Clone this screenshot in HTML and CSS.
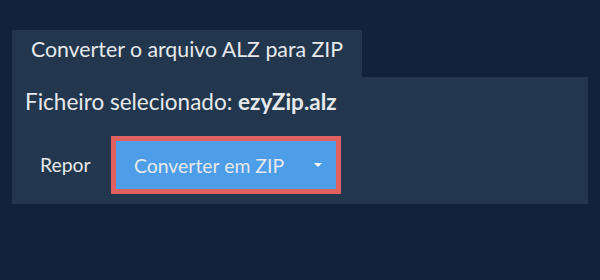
FILE: index.html
```html
<!DOCTYPE html>
<html>
<head>
<meta charset="utf-8">
<link rel="stylesheet" href="styles.css">
</head>
<body>
<div class="wrap">
  <div class="tab">Converter o arquivo ALZ para ZIP</div>
  <div class="panel">
    <div class="file">Ficheiro selecionado: <b>ezyZip.alz</b></div>
    <div class="actions">
      <button class="reset">Repor</button>
      <div class="convert">
        <span class="label">Converter em ZIP</span>
        <span class="caret"></span>
      </div>
    </div>
  </div>
</div>
</body>
</html>
```
FILE: styles.css
```css
html, body {
  margin: 0;
  padding: 0;
  background: #11233a;
  width: 600px;
  height: 280px;
  overflow: hidden;
  font-family: Lato, "Open Sans", sans-serif;
  color: #e6e9ec;
}
.wrap {
  padding: 30px 12px 0 12px;
}
.tab {
  width: 350px;
  height: 47px;
  box-sizing: border-box;
  background: #22374d;
  font-size: 21.3px;
  line-height: 25px;
  padding-top: 7px;
  text-align: center;
}
.panel {
  background: #22374d;
  height: 127px;
  box-sizing: border-box;
  padding: 10px 11px 0 13px;
}
.file {
  font-size: 22.5px;
  line-height: 30px;
}
.file b {
  font-weight: 700;
}
.actions {
  display: flex;
  align-items: center;
  margin-top: 19px;
}
.reset {
  background: none;
  border: none;
  color: #e6e9ec;
  font-family: inherit;
  font-size: 19.4px;
  line-height: 24px;
  padding: 0;
  margin-left: 15px;
  width: 54px;
  text-align: left;
}
.convert {
  margin-left: 17px;
  width: 230px;
  height: 58px;
  box-sizing: border-box;
  border: 5px solid #e06060;
  background: #4d9de8;
  display: flex;
  align-items: center;
  padding-left: 18px;
  font-size: 19.4px;
}
.label {
  flex: 1;
}
.caret {
  width: 0;
  height: 0;
  border-left: 4px solid transparent;
  border-right: 4px solid transparent;
  border-top: 4px solid #ffffff;
  margin-right: 14px;
}
```
